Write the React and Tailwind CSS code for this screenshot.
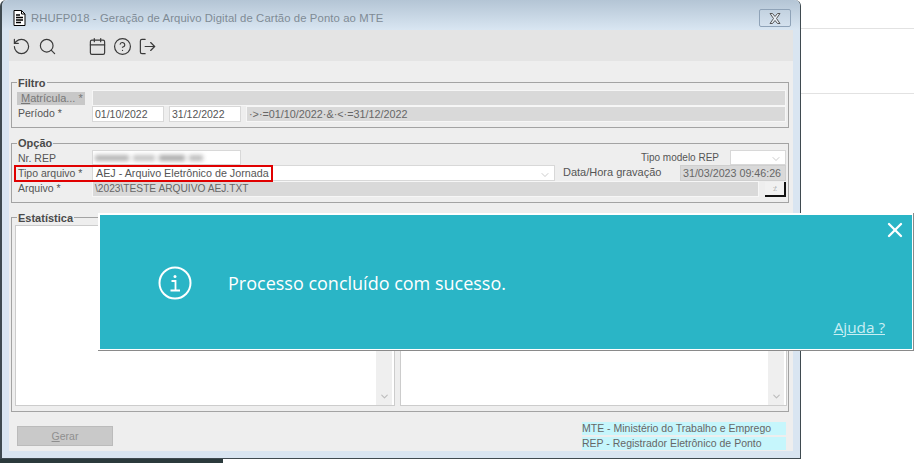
import React from 'react'
import { RotateCcw, Search, Calendar, CircleHelp, LogOut, ChevronDown, X } from 'lucide-react'

const Legend = ({ className, children }) => (
  <span className={`absolute left-[5px] bg-[#eeeeee] px-[1px] text-[11px] leading-[14px] font-bold text-[#4a4a4a] ${className}`}>{children}</span>
)

const Ro = ({ className, children }) => (
  <div className={`h-full border border-[#f6f6f6] bg-[#d9d9d9] pl-[2px] leading-[14px] text-[#666] whitespace-nowrap overflow-hidden ${className}`}>{children}</div>
)

const Input = ({ className, children }) => (
  <div className={`h-full border border-[#d8d8d8] bg-white pl-[2px] leading-[14px] text-[#555] whitespace-nowrap overflow-hidden ${className}`}>{children}</div>
)

const Panel = ({ className }) => (
  <div className={`flex h-full border border-[#cccccc] bg-white justify-end pr-[2px] ${className}`}>
    <div className="flex w-[16px] flex-col items-center justify-end bg-[#efefef] pb-[3px]">
      <ChevronDown size={11} strokeWidth={2.5} className="text-[#bdbdbd]" />
    </div>
  </div>
)

const Notice = () => (
  <div className="absolute left-[98px] top-[213px] h-[138px] w-[816px] border-b border-r border-[#8a8a8a] bg-white pl-[2px] pt-[2px]">
    <div className="relative flex h-[134px] w-[812px] items-center bg-[#2ab5c6] text-white [font-family:'Open_Sans',sans-serif]">
      <svg width="34" height="34" viewBox="0 0 34 34" fill="none" stroke="white" className="ml-[58px] mt-[1px]">
        <circle cx="17" cy="17" r="15.5" strokeWidth="2" />
        <circle cx="17" cy="10.5" r="1.5" fill="white" stroke="none" />
        <path d="M13.5 15h4v9.5M12.5 24.5h9.5" strokeWidth="1.8" />
      </svg>
      <span className="ml-[36px] mt-[2px] text-[18px] leading-[24px]">Processo concluído com sucesso.</span>
      <X size={24} strokeWidth={2.3} className="absolute right-[5px] top-[3px]" />
      <a className="absolute right-[27px] bottom-[13px] text-[15.3px] leading-[18px] text-[#c9eef3] underline">Ajuda ?</a>
    </div>
  </div>
)

export default function App() {
  return (
    <div className="relative h-[463px] w-[914px] overflow-hidden bg-white [font-family:'Liberation_Sans',sans-serif] text-[10.5px] text-[#555]">
      {/* pagina atras da janela */}
      <div className="absolute left-[801px] right-0 top-[28px] h-[1px] bg-[#e2e2e2]" />
      <div className="absolute left-[801px] right-0 top-[93px] h-[1px] bg-[#e2e2e2]" />
      <div className="absolute left-0 top-[459px] h-[4px] w-[223px] bg-[#2b3a3c]" />

      {/* janela */}
      <div className="absolute left-0 top-0 flex h-[459px] w-[801px] flex-col rounded-t-[6px] border-b border-l-2 border-r border-[#3f4a50] bg-[#d9e5f1]">
        <div className="flex h-[30px] shrink-0 items-center rounded-t-[6px] bg-gradient-to-b from-[#b4c5d5] to-[#d9e6f2] pl-[11px] pr-[8px] pt-[6px]">
          <svg width="13" height="16" viewBox="0 0 13 16" className="shrink-0">
            <path d="M1 .5h7.5l3.5 3.5v11.5H1z" fill="white" stroke="black" />
            <path d="M8.5.5v3.5H12" fill="none" stroke="black" />
            <path d="M3 5h4M3 7.5h7M3 10h7M3 12.5h5" stroke="black" strokeWidth="1.6" />
          </svg>
          <span className="ml-[5px] text-[11.3px] tracking-[0.1px] text-[#7f8b95]">RHUFP018 - Geração de Arquivo Digital de Cartão de Ponto ao MTE</span>
          <div className="ml-auto mr-[1px] flex h-[18px] w-[32px] items-center justify-center rounded-[2px] border border-[#8fa3b8] bg-gradient-to-b from-[#c3d2e0] to-[#d4e1ee]">
            <svg width="12" height="11" viewBox="0 0 12 11" fill="#e8eef4" stroke="#555">
              <path d="M1 .5h2.5L6 3.5 8.5.5H11L7.5 5.5 11 10.5H8.5L6 7.5 3.5 10.5H1l3.5-5z" />
            </svg>
          </div>
        </div>

        <div className="mx-[7px] flex h-[421px] flex-col bg-[#eeeeee]">
          <div className="flex h-[31px] shrink-0 items-center bg-[#e4e4e4] pl-[3px] pt-[2px] text-[#3a3a3a]">
            <RotateCcw size={19} strokeWidth={1.5} />
            <Search size={19} strokeWidth={1.5} className="ml-[7px]" />
            <Calendar size={19} strokeWidth={1.5} className="ml-[31px]" />
            <CircleHelp size={19} strokeWidth={1.5} className="ml-[6px]" />
            <LogOut size={19} strokeWidth={1.5} className="ml-[6px]" />
          </div>

          {/* Filtro */}
          <div className="relative ml-[2px] mt-[21px] h-[46px] w-[778px] shrink-0 border border-[#a3a3a3] pt-[7px] pr-[2px]">
            <Legend className="top-[-7px]">Filtro</Legend>
            <div className="flex h-[16px]">
              <div className="ml-[5px] mt-[2px] h-[13px] w-[68px] bg-[#c8c8c8] pl-[4px] text-[11px] leading-[13px] text-[#777]"><span className="underline">M</span>atrícula... *</div>
              <Ro className="ml-[7px] flex-1" />
            </div>
            <div className="flex h-[16px]">
              <div className="ml-[5px] w-[68px] pl-[1px] leading-[14px]">Período *</div>
              <Input className="ml-[7px] w-[72px]">01/10/2022</Input>
              <Input className="ml-[5px] w-[72px]">31/12/2022</Input>
              <Ro className="ml-[5px] flex-1 text-[10.8px]">·&gt;·=01/10/2022·&amp;·&lt;·=31/12/2022</Ro>
            </div>
          </div>

          {/* Opção */}
          <div className="relative ml-[2px] mt-[15px] h-[60px] w-[778px] shrink-0 border border-[#a3a3a3] pt-[6px] pr-[2px]">
            <Legend className="top-[-8px]">Opção</Legend>
            <div className="flex h-[15px]">
              <div className="ml-[5px] w-[68px] pl-[1px] leading-[16px]">Nr. REP</div>
              <Input className="ml-[7px] flex w-[149px] items-center">
                <div className="flex gap-[4px] blur-[2px]">
                  <div className="h-[6px] w-[34px] bg-[#b4b4b4]" />
                  <div className="h-[6px] w-[22px] bg-[#c4c4c4]" />
                  <div className="h-[6px] w-[26px] bg-[#aaaaaa]" />
                  <div className="h-[6px] w-[14px] bg-[#bcbcbc]" />
                </div>
              </Input>
              <div className="ml-[400px] w-[78px] whitespace-nowrap text-[10px] leading-[16px]">Tipo modelo REP</div>
              <Input className="relative ml-[11px] flex-1">
                <ChevronDown size={12} strokeWidth={1.2} className="absolute right-[3px] top-[2px] text-[#aaa]" />
              </Input>
            </div>
            <div className="relative flex h-[16px]">
              <div className="ml-[5px] w-[68px] pl-[1px] leading-[16px]">Tipo arquivo *</div>
              <Input className="relative ml-[7px] w-[463px] pl-[3px] text-[10.75px] text-[#444]">
                AEJ - Arquivo Eletrônico de Jornada
                <ChevronDown size={12} strokeWidth={1.2} className="absolute right-[3px] top-[3px] text-[#aaa]" />
              </Input>
              <div className="ml-[8px] w-[117px] text-[11px] leading-[15px]">Data/Hora gravação</div>
              <Ro className="flex-1 text-[10.7px] outline outline-[#cfcfcf] outline-offset-[-1px]">31/03/2023 09:46:26</Ro>
              {/* destaque vermelho sobre a linha */}
              <div className="absolute left-[2px] top-0 h-[17px] w-[259px] border-2 border-[#e00000]" />
            </div>
            <div className="flex h-[16px]">
              <div className="ml-[5px] w-[68px] pl-[1px] leading-[14px]">Arquivo *</div>
              <Ro className="ml-[7px] w-[667px] text-[10.2px]">\2023\TESTE ARQUIVO AEJ.TXT</Ro>
              <div className="ml-[6px] mt-[1px] flex h-[15px] flex-1 items-center justify-center border-b-2 border-r-2 border-[#111] bg-[#f1f1f1] text-[8px] leading-none tracking-[-1px] text-[#aaa]">:/:</div>
            </div>
          </div>

          {/* Estatística */}
          <div className="relative ml-[2px] mt-[14px] h-[195px] w-[778px] shrink-0 border border-[#a3a3a3] pb-[5px] pl-[3px] pr-[1px] pt-[7px]">
            <Legend className="top-[-7px]">Estatística</Legend>
            <div className="flex h-full gap-[5px]">
              <Panel className="w-[380px]" />
              <Panel className="flex-1" />
            </div>
          </div>

          {/* rodape */}
          <div className="flex flex-1 pl-[8px] pr-[7px] pt-[10px]">
            <div className="mt-[4px] flex h-[20px] w-[96px] items-center justify-center border border-[#bbbbbb] bg-[#c9c9c9] pt-[1px] text-[#8f8f8f]">
              <span><span className="underline">G</span>erar</span>
            </div>
            <div className="ml-auto flex w-[204px] flex-col gap-[2px] text-[#666]">
              <div className="h-[13px] whitespace-nowrap bg-[#c6f6fc] leading-[13px]">MTE - Ministério do Trabalho e Emprego</div>
              <div className="h-[13px] whitespace-nowrap bg-[#c6f6fc] leading-[13px]">REP - Registrador Eletrônico de Ponto</div>
            </div>
          </div>
        </div>
      </div>

      <Notice />
    </div>
  )
}
